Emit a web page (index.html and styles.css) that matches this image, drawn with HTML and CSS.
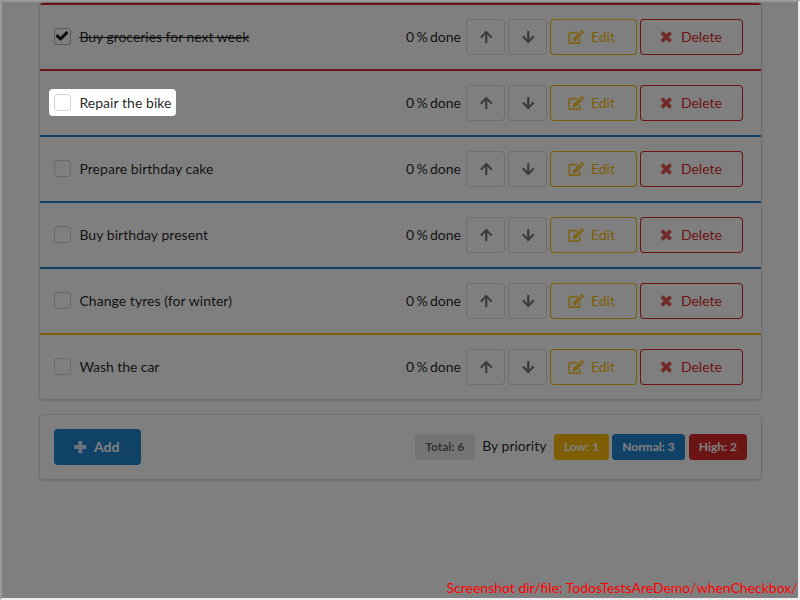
FILE: index.html
```html
<!DOCTYPE html>
<html lang="en">
<head>
<meta charset="utf-8">
<title>Todos</title>
<link rel="stylesheet" href="styles.css">
</head>
<body>
<svg width="0" height="0" class="sprite" aria-hidden="true">
  <symbol id="up" viewBox="0 0 448 512"><path d="M34.9 289.5l-22.2-22.2c-9.4-9.4-9.4-24.6 0-33.9L207 39c9.4-9.4 24.6-9.4 33.9 0l194.3 194.3c9.4 9.4 9.4 24.6 0 33.9L413 289.4c-9.5 9.5-25 9.3-34.3-.4L264 168.6V456c0 13.3-10.7 24-24 24h-32c-13.3 0-24-10.7-24-24V168.6L69.2 289.4c-9.3 9.8-24.8 10-34.3.1z"/></symbol>
  <symbol id="down" viewBox="0 0 448 512"><path transform="matrix(1 0 0 -1 0 512)" d="M34.9 289.5l-22.2-22.2c-9.4-9.4-9.4-24.6 0-33.9L207 39c9.4-9.4 24.6-9.4 33.9 0l194.3 194.3c9.4 9.4 9.4 24.6 0 33.9L413 289.4c-9.5 9.5-25 9.3-34.3-.4L264 168.6V456c0 13.3-10.7 24-24 24h-32c-13.3 0-24-10.7-24-24V168.6L69.2 289.4c-9.3 9.8-24.8 10-34.3.1z"/></symbol>
  <symbol id="edit" viewBox="0 0 576 512"><path d="M402.6 83.2l90.2 90.2c3.8 3.8 3.8 10 0 13.8L274.4 405.6l-92.8 10.3c-12.4 1.4-22.9-9.1-21.5-21.5l10.3-92.8L388.8 83.2c3.8-3.8 10-3.8 13.8 0zm162-22.9l-48.8-48.8c-15.2-15.2-39.9-15.2-55.2 0l-35.4 35.4c-3.8 3.8-3.8 10 0 13.8l90.2 90.2c3.8 3.8 10 3.8 13.8 0l35.4-35.4c15.2-15.3 15.2-40 0-55.2zM384 346.2V448H64V128h229.8c3.2 0 6.2-1.3 8.5-3.5l40-40c7.6-7.6 2.2-20.5-8.5-20.5H48C21.5 64 0 85.5 0 112v352c0 26.5 21.5 48 48 48h352c26.5 0 48-21.5 48-48V306.2c0-10.7-12.9-16-20.5-8.5l-40 40c-2.2 2.3-3.5 5.3-3.5 8.5z"/></symbol>
  <symbol id="times" viewBox="0 0 384 512"><path d="M323.1 441l53.9-53.9c9.4-9.4 9.4-24.5 0-33.9L279.8 256l97.2-97.2c9.4-9.4 9.4-24.5 0-33.9L323.1 71c-9.4-9.4-24.5-9.4-33.9 0L192 168.2 94.8 71c-9.4-9.4-24.5-9.4-33.9 0L7 124.9c-9.4 9.4-9.4 24.5 0 33.9l97.2 97.2L7 353.2c-9.4 9.4-9.4 24.5 0 33.9L60.9 441c9.4 9.4 24.5 9.4 33.9 0l97.2-97.2 97.2 97.2c9.3 9.3 24.5 9.3 33.9 0z"/></symbol>
  <symbol id="plus" viewBox="0 0 448 512"><path d="M424 184H296V56c0-16-10-24-24-24h-96c-14 0-24 8-24 24v128H24c-14 0-24 10-24 24v96c0 14 10 24 24 24h128v128c0 16 10 24 24 24h96c14 0 24-8 24-24V328h128c14 0 24-10 24-24v-96c0-14-10-24-24-24z"/></symbol>
  <symbol id="check" viewBox="0 0 512 512"><path class="heavy" d="M173.898 439.404l-166.4-166.4c-9.997-9.997-9.997-26.206 0-36.204l36.203-36.204c9.997-9.998 26.207-9.998 36.204 0L192 312.69 432.095 72.596c9.997-9.997 26.207-9.997 36.204 0l36.203 36.204c9.997 9.997 9.997 26.206 0 36.204l-294.4 294.401c-9.998 9.997-26.207 9.997-36.204-.001z"/></symbol>
</svg>
<div class="frame">
  <div class="segments">
    <div class="row red">
      <span class="box checked"><svg><use href="#check"/></svg></span><span class="title done">Buy groceries for next week</span>
      <span class="percent">0 % done</span>
      <span class="button icon-only"><svg><use href="#up"/></svg></span><span class="button icon-only"><svg><use href="#down"/></svg></span><span class="button edit"><svg><use href="#edit"/></svg>Edit</span><span class="button delete"><svg><use href="#times"/></svg>Delete</span>
    </div>
    <div class="row red">
      <span class="box"></span><span class="title">Repair the bike</span>
      <span class="percent">0 % done</span>
      <span class="button icon-only"><svg><use href="#up"/></svg></span><span class="button icon-only"><svg><use href="#down"/></svg></span><span class="button edit"><svg><use href="#edit"/></svg>Edit</span><span class="button delete"><svg><use href="#times"/></svg>Delete</span>
    </div>
    <div class="row blue">
      <span class="box"></span><span class="title">Prepare birthday cake</span>
      <span class="percent">0 % done</span>
      <span class="button icon-only"><svg><use href="#up"/></svg></span><span class="button icon-only"><svg><use href="#down"/></svg></span><span class="button edit"><svg><use href="#edit"/></svg>Edit</span><span class="button delete"><svg><use href="#times"/></svg>Delete</span>
    </div>
    <div class="row blue">
      <span class="box"></span><span class="title">Buy birthday present</span>
      <span class="percent">0 % done</span>
      <span class="button icon-only"><svg><use href="#up"/></svg></span><span class="button icon-only"><svg><use href="#down"/></svg></span><span class="button edit"><svg><use href="#edit"/></svg>Edit</span><span class="button delete"><svg><use href="#times"/></svg>Delete</span>
    </div>
    <div class="row blue">
      <span class="box"></span><span class="title">Change tyres (for winter)</span>
      <span class="percent">0 % done</span>
      <span class="button icon-only"><svg><use href="#up"/></svg></span><span class="button icon-only"><svg><use href="#down"/></svg></span><span class="button edit"><svg><use href="#edit"/></svg>Edit</span><span class="button delete"><svg><use href="#times"/></svg>Delete</span>
    </div>
    <div class="row yellow">
      <span class="box"></span><span class="title tight">Wash the car</span>
      <span class="percent">0 % done</span>
      <span class="button icon-only"><svg><use href="#up"/></svg></span><span class="button icon-only"><svg><use href="#down"/></svg></span><span class="button edit"><svg><use href="#edit"/></svg>Edit</span><span class="button delete"><svg><use href="#times"/></svg>Delete</span>
    </div>
  </div>
  <div class="footer">
    <span class="button add"><svg><use href="#plus"/></svg>Add</span>
    <div class="stats">
      <span class="label total">Total: 6</span>
      <span class="by">By priority</span>
      <span class="label low">Low: 1</span>
      <span class="label normal">Normal: 3</span>
      <span class="label high">High: 2</span>
    </div>
  </div>
  <div class="spotlight"></div>
  <div class="caption">Screenshot dir/file: TodosTestsAreDemo/whenCheckbox/</div>
</div>
</body>
</html>
```
FILE: styles.css
```css
* { box-sizing: border-box; }
body {
  margin: 0;
  background: #fff;
  color: rgba(0, 0, 0, .87);
  font: 14px/20px Lato, sans-serif;
  overflow: hidden;
}
.sprite { position: absolute; }
.frame {
  position: relative;
  width: 800px;
  height: 600px;
  border: 2px solid;
  border-color: #9a9a9a #eee #eee #9a9a9a;
  padding: 0 36px 0 37px;
  overflow: hidden;
}
.segments, .footer {
  border: 1px solid rgba(34, 36, 38, .15);
  border-radius: 4px;
  box-shadow: 0 1px 2px 0 rgba(34, 36, 38, .15);
}
.segments { overflow: hidden; }
.row {
  display: flex;
  align-items: center;
  height: 66px;
  padding: 0 14px;
  border-top: 2px solid;
}
.red { border-color: #db2828; }
.blue { border-color: #2185d0; }
.yellow { border-color: #fbbd08; }
.box {
  width: 17px;
  height: 17px;
  margin-bottom: 2px;
  border: 1px solid #d4d4d5;
  border-radius: 3px;
}
.box.checked { border-color: rgba(34, 36, 38, .35); }
.box svg { display: block; width: 12px; height: 12px; margin: 1px 0 0 1px; overflow: visible; }
.heavy { stroke: currentColor; stroke-width: 36px; }
.title { flex: 1; margin-left: 8.4px; letter-spacing: .05px; }
.title.done { letter-spacing: -.03px; text-decoration: line-through; }
.title.tight { letter-spacing: -.06px; }
.percent { margin-right: 5px; word-spacing: -1.2px; }
svg { fill: currentColor; }
.button {
  display: flex;
  align-items: center;
  height: 36px;
  padding: 0 21px;
  margin-right: 3px;
  border-radius: 4px;
  line-height: 14px;
  box-shadow: inset 0 0 0 1px currentColor;
}
.button svg {
  flex: none;
  width: 16.5px;
  height: 14px;
  margin: 0 6px 0 -3px;
  opacity: .8;
}
.icon-only {
  width: 39px;
  padding: 0 11px;
  color: rgba(0, 0, 0, .6);
  box-shadow: inset 0 0 0 1px rgba(34, 36, 38, .15);
}
.icon-only svg { margin: 0 0 0 .5px; opacity: .9; }
.edit { width: 87px; padding-left: 21.4px; color: #fbbd08; }
.delete { width: 103px; margin-right: 4px; padding-left: 21.4px; color: #db2828; }
.delete svg { stroke: currentColor; stroke-width: 20px; }
.footer {
  display: flex;
  align-items: center;
  justify-content: space-between;
  height: 66px;
  margin-top: 14px;
  padding: 0 14px;
}
.add {
  width: 87px;
  padding-left: 20.5px;
  background: #2185d0;
  color: #fff;
  font-weight: 700;
  box-shadow: none;
}
.stats { display: flex; align-items: center; }
.label {
  height: 26px;
  padding: 7px 10px;
  border-radius: 3.5px;
  color: #fff;
  font-size: 12px;
  font-weight: 700;
  line-height: 12px;
}
.total { width: 60px; background: #e8e8e8; color: rgba(0, 0, 0, .6); }
.by { margin: -2px 7.4px 0 7px; }
.low { background: #fbbd08; }
.normal { background: #2185d0; margin: 0 4px 0 3px; }
.high { background: #db2828; }
.spotlight {
  position: absolute;
  left: 47px;
  top: 87px;
  width: 127px;
  height: 27px;
  border-radius: 4px;
  box-shadow: 0 0 0 1000px rgba(0, 0, 0, .5);
}
.caption {
  position: absolute;
  right: .4px;
  bottom: 0;
  color: #f00;
  white-space: nowrap;
}
```
